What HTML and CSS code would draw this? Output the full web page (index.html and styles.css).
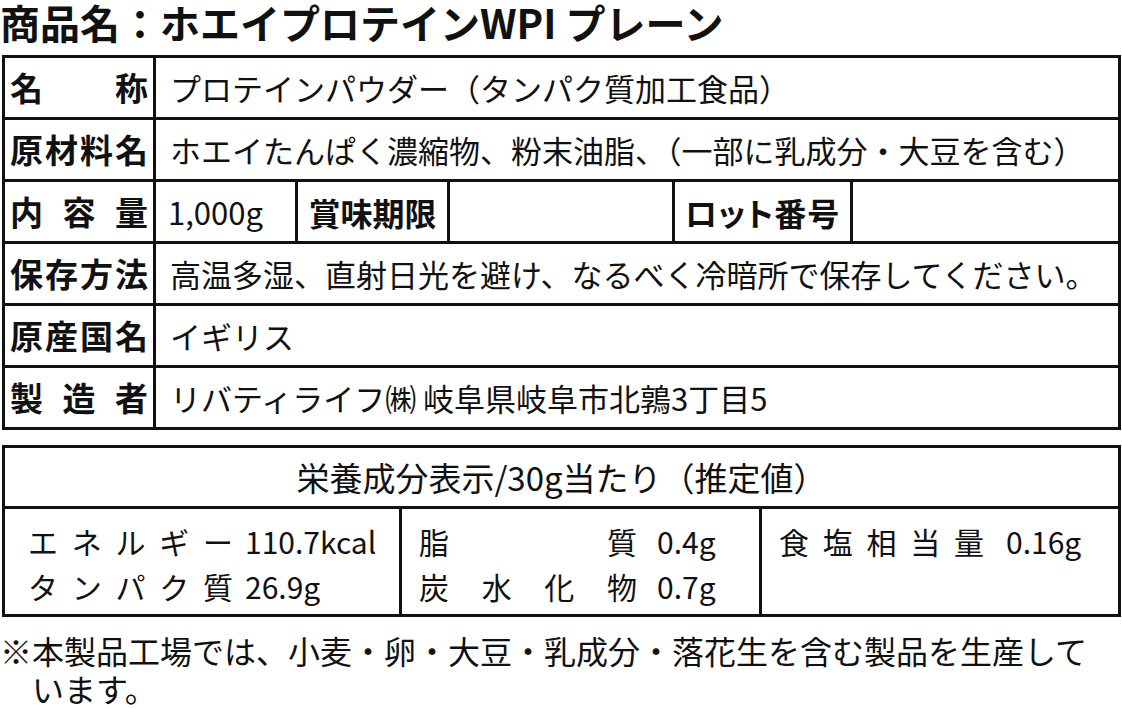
FILE: index.html
```html
<!DOCTYPE html>
<html lang="ja">
<head>
<meta charset="utf-8">
<link rel="stylesheet" href="styles.css">
</head>
<body>
<h1 class="title">商品名：ホエイプロテインWPI プレーン</h1>

<div class="spec">
  <div class="row">
    <div class="label col-label">名 称</div>
    <div class="value">プロテインパウダー（タンパク質加工食品）</div>
  </div>
  <div class="row">
    <div class="label col-label">原材料名</div>
    <div class="value">ホエイたんぱく濃縮物、粉末油脂、（一部に乳成分・大豆を含む）</div>
  </div>
  <div class="row">
    <div class="label col-label">内 容 量</div>
    <div class="value qty">1,000g</div>
    <div class="label sub best">賞味期限</div>
    <div class="value blank-a"></div>
    <div class="label sub lot">ロット番号</div>
    <div class="value blank-b"></div>
  </div>
  <div class="row">
    <div class="label col-label">保存方法</div>
    <div class="value">高温多湿、直射日光を避け、なるべく冷暗所で保存してください。</div>
  </div>
  <div class="row">
    <div class="label col-label">原産国名</div>
    <div class="value">イギリス</div>
  </div>
  <div class="row">
    <div class="label col-label">製 造 者</div>
    <div class="value">リバティライフ㈱ 岐阜県岐阜市北鶉3丁目5</div>
  </div>
</div>

<div class="nutrition">
  <div class="n-title">栄養成分表示/30g当たり（推定値）</div>
  <div class="n-cell n-first">
    <div class="n-line"><span class="n-label">エネルギー</span><span class="n-val">110.7kcal</span></div>
    <div class="n-line"><span class="n-label">タンパク質</span><span class="n-val">26.9g</span></div>
  </div>
  <div class="n-cell n-second">
    <div class="n-line"><span class="n-label">脂 質</span><span class="n-val">0.4g</span></div>
    <div class="n-line"><span class="n-label">炭水化物</span><span class="n-val">0.7g</span></div>
  </div>
  <div class="n-cell n-third">
    <div class="n-line"><span class="n-label">食塩相当量</span><span class="n-val">0.16g</span></div>
  </div>
</div>

<p class="note">※本製品工場では、小麦・卵・大豆・乳成分・落花生を含む製品を生産して<br>います。</p>
</body>
</html>
```

FILE: styles.css
```css
html, body {
  margin: 0;
  padding: 0;
  background: #fff;
}

body {
  width: 1122px;
  height: 709px;
  overflow: hidden;
  color: #111;
  font-family: "Noto Sans CJK JP", "Noto Sans", sans-serif;
}

.title {
  margin: 0 0 11px 0;
  font-size: 40px;
  line-height: 44px;
  font-weight: 700;
  white-space: nowrap;
}

/* ---- spec table ---- */
.spec {
  margin-left: 2px;
  width: 1113px;
  border: 3px solid #111;
}

.row {
  display: flex;
  height: 59px;
  border-bottom: 3px solid #111;
}

.row:last-child {
  border-bottom: none;
}

.label {
  display: flex;
  align-items: center;
  box-sizing: border-box;
  font-weight: 700;
  font-size: 33px;
  line-height: 1;
  border-right: 3px solid #111;
  white-space: nowrap;
}

.col-label {
  display: block;
  width: 151px;
  padding: 13px 5px 0 5px;
  text-align: justify;
  text-align-last: justify;
}

.value {
  display: flex;
  align-items: center;
  box-sizing: border-box;
  padding-left: 14px;
  font-size: 31px;
  white-space: nowrap;
  flex: 1;
}

.qty {
  flex: 0 0 142px;
  border-right: 3px solid #111;
  padding-left: 12px;
}

.sub {
  justify-content: center;
  font-size: 32px;
}

.best {
  flex: 0 0 152px;
}

.blank-a {
  flex: 0 0 225px;
  border-right: 3px solid #111;
}

.lot {
  flex: 0 0 178px;
  font-feature-settings: "palt";
  letter-spacing: 1px;
}

.blank-b {
  flex: 1;
}

/* ---- nutrition table ---- */
.nutrition {
  margin: 15px 0 0 2px;
  width: 1113px;
  border: 3px solid #111;
  display: grid;
  grid-template-columns: 397px 360px 1fr;
  grid-template-rows: 61px 105px;
}

.n-title {
  grid-column: 1 / 4;
  border-bottom: 3px solid #111;
  display: flex;
  align-items: center;
  justify-content: center;
  font-size: 33px;
  white-space: nowrap;
}

.n-cell {
  padding-top: 10px;
  font-size: 30px;
}

.n-first {
  padding-left: 23px;
  border-right: 3px solid #111;
}

.n-second {
  padding-left: 17px;
  border-right: 3px solid #111;
}

.n-third {
  padding-left: 17px;
}

.n-line {
  height: 45px;
  line-height: 45px;
  white-space: nowrap;
}

.n-label {
  display: inline-block;
  width: 205px;
  text-align: justify;
  text-align-last: justify;
}

.n-val {
  margin-left: 12px;
}

.n-second .n-label {
  width: 218px;
}

.n-second .n-val {
  margin-left: 20px;
}

.n-third .n-val {
  margin-left: 22px;
}

/* ---- footnote ---- */
.note {
  margin: 14px 0 0 0;
  padding-left: 32px;
  text-indent: -32px;
  font-size: 32px;
  line-height: 38px;
  white-space: nowrap;
}
```
